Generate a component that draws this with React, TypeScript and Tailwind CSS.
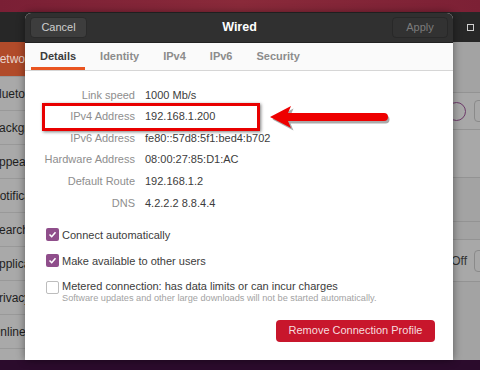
import { ReactNode } from "react";

const rows: [string, string][] = [
  ["Link speed", "1000 Mb/s"],
  ["IPv4 Address", "192.168.1.200"],
  ["IPv6 Address", "fe80::57d8:5f1:bed4:b702"],
  ["Hardware Address", "08:00:27:85:D1:AC"],
  ["Default Route", "192.168.1.2"],
  ["DNS", "4.2.2.2 8.8.4.4"],
];

const sidebar = [
  "Network",
  "Bluetooth",
  "Background",
  "Appearance",
  "Notifications",
  "Search",
  "Applications",
  "Privacy",
  "Online Accounts",
  "Sharing",
];

const tabs = ["Details", "Identity", "IPv4", "IPv6", "Security"];

function Check({ checked, children }: { checked: boolean; children: ReactNode }) {
  return (
    <div className="flex items-start gap-[3px]">
      {checked ? (
        <div className="w-[13px] h-[13px] mt-[1px] shrink-0 rounded-[2px] bg-[#8f4e8b] flex items-center justify-center">
          <svg width="9" height="9" viewBox="0 0 9 9">
            <polyline points="1.5,4.5 3.7,6.7 7.5,2.3" fill="none" stroke="white" strokeWidth="1.6" />
          </svg>
        </div>
      ) : (
        <div className="w-[13px] h-[13px] mt-[1px] shrink-0 rounded-[2px] border border-[#bdbdbd] bg-white" />
      )}
      <div>{children}</div>
    </div>
  );
}

export default function App() {
  return (
    <div className="relative w-[480px] h-[370px] overflow-hidden flex flex-col font-['Liberation_Sans',sans-serif]">
      <div className="h-[12px] shrink-0 bg-gradient-to-r from-[#7a1f35] via-[#8a2a3a] to-[#7c2035]" />

      <div className="flex-1 min-h-0 flex flex-col">
        <div className="h-[30px] shrink-0 bg-[#272727] flex items-center justify-end pr-[4px]">
          <div className="w-[7px] h-[7px] border border-[#d0d0d0] mr-[2px]" />
        </div>
        <div className="flex-1 min-h-0 overflow-hidden flex">
          <div className="w-[25px] shrink-0 bg-[#a9a9a9] overflow-hidden text-[12px] text-[#1e1e1e]">
            {sidebar.map((s, i) => (
              <div
                key={s}
                className={
                  i === 0
                    ? "h-[34px] flex items-center bg-[#b14b2a] text-[#ead5cd]"
                    : "h-[34px] flex items-center border-t border-[#999999]"
                }
              >
                <span className="ml-[-9px] whitespace-nowrap">{s}</span>
              </div>
            ))}
          </div>
          <div className="flex-1 bg-[#a3a3a3] flex flex-col text-[12px] text-[#2a2a2a]">
            <div className="h-[50px] shrink-0" />
            <div className="h-[38px] shrink-0 border-y border-[#939393] bg-[#a8a8a8] flex items-center justify-end">
              <div className="w-[19px] h-[19px] rounded-full border border-[#6d3a6a] mr-[8px]" />
              <div className="w-[30px] h-[22px] rounded-[4px] border border-[#8a8a8a] mr-[-24px]" />
            </div>
            <div className="h-[48px] shrink-0 border-b border-[#939393] bg-[#a8a8a8]" />
            <div className="h-[44px] shrink-0 border-b border-[#939393]" />
            <div className="h-[17px] shrink-0" />
            <div className="h-[43px] shrink-0 border-y border-[#939393] bg-[#a8a8a8] flex items-center justify-end">
              <span className="mr-[7px] text-[#333]">Off</span>
              <div className="w-[30px] h-[22px] rounded-[4px] border border-[#8a8a8a] mr-[-24px]" />
            </div>
          </div>
        </div>
      </div>

      <div className="h-[10px] shrink-0 bg-[#2b0b2c]" />

      <div className="absolute left-[25px] top-[13px] w-[428px] h-[347px] rounded-t-[6px] overflow-hidden shadow-[0_0_8px_rgba(0,0,0,0.45)] flex flex-col bg-white">
        <div className="h-[30px] shrink-0 bg-[#303030] flex items-center justify-between px-[5px] border-b border-[#222]">
          <div className="w-[57px] h-[21px] rounded-[4px] bg-[#3d3d3d] border border-[#2a2a2a] flex items-center justify-center text-[11px] text-[#cfcfcf]">
            Cancel
          </div>
          <div className="text-[12.5px] font-bold text-white">Wired</div>
          <div className="w-[56px] h-[21px] rounded-[4px] bg-[#323232] border border-[#282828] flex items-center justify-center text-[11px] text-[#7c7c7c]">
            Apply
          </div>
        </div>

        <div className="h-[28px] shrink-0 bg-[#fafafa] border-b border-[#d6d6d6] flex items-stretch px-[6px] gap-[6px]">
          {tabs.map((t, i) => (
            <div
              key={t}
              className={
                i === 0
                  ? "px-[9px] flex items-center text-[11px] font-bold text-[#3c3c3c] border-b-[3px] border-[#e95420] pt-[3px]"
                  : "px-[9px] flex items-center text-[11px] font-bold text-[#8c8c8c]"
              }
            >
              {t}
            </div>
          ))}
        </div>

        <div className="flex-1 flex flex-col pt-[13px]">
          <div className="grid grid-cols-[110px_1fr] gap-x-[10px]">
            {rows.map(([k, v]) => (
              <div key={k} className="contents">
                <div className="h-[21.6px] flex items-center justify-end whitespace-nowrap text-[11px] text-[#8e8e8e]">{k}</div>
                <div className="h-[21.6px] flex items-center whitespace-nowrap text-[11px] text-[#3c3c3c]">{v}</div>
              </div>
            ))}
          </div>

          <div className="flex flex-col gap-[10px] pl-[21px] pt-[13px] text-[11px] text-[#3c3c3c]">
            <Check checked>Connect automatically</Check>
            <Check checked>Make available to other users</Check>
            <Check checked={false}>
              <div className="leading-[13px]">Metered connection: has data limits or can incur charges</div>
              <div className="text-[9.2px] leading-[11px] text-[#a3a3a3]">
                Software updates and other large downloads will not be started automatically.
              </div>
            </Check>
          </div>

          <div className="flex justify-end pr-[18px] pt-[16px]">
            <div className="w-[159px] h-[22px] rounded-[4px] bg-[#c8162c] flex items-center justify-center text-[11px] text-[#f6dcdf]">
              Remove Connection Profile
            </div>
          </div>
        </div>
      </div>

      <div className="absolute left-[42px] top-[103px] w-[218px] h-[28px] border-[3px] border-[#e80000] shadow-[1px_1px_3px_rgba(0,0,0,0.5)]" />

      <svg className="absolute left-[266px] top-[103px]" width="128" height="30" viewBox="0 0 128 30">
        <path d="M5 15 L26 4 L23 11 L118 11 A4 4 0 0 1 118 19 L23 19 L26 26 Z" fill="#555" opacity="0.5" transform="translate(1.5,1.5)" />
        <path d="M4 14 L25 3 L22 10 L118 10 A4 4 0 0 1 118 18 L22 18 L25 25 Z" fill="#ee0000" />
      </svg>
    </div>
  );
}
